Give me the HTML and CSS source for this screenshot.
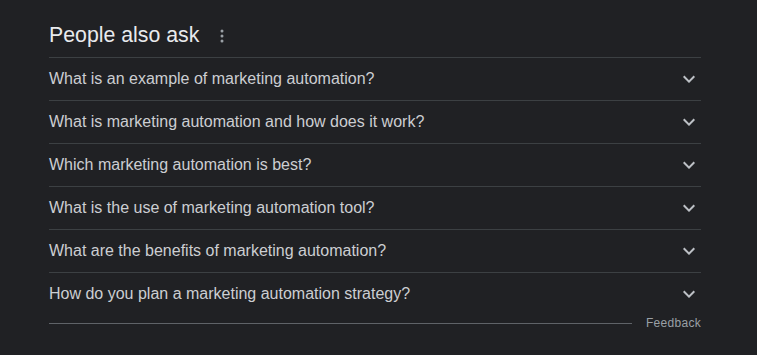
FILE: index.html
```html
<!DOCTYPE html>
<html lang="en">
<head>
    <meta charset="UTF-8">
    <title>People also ask</title>
    <link rel="stylesheet" href="styles.css">
</head>
<body>
    <div class="paa">
        <div class="paa-header">
            <h2>People also ask</h2>
            <svg class="more-icon" width="4" height="14" viewBox="0 0 4 14"><circle cx="2" cy="2" r="1.5"/><circle cx="2" cy="7" r="1.5"/><circle cx="2" cy="12" r="1.5"/></svg>
        </div>
        <div class="paa-list">
            <div class="paa-item"><span>What is an example of marketing automation?</span><svg class="chevron" viewBox="0 0 24 24"><path d="M7.41 8.59 12 13.17l4.59-4.58L18 10l-6 6-6-6z"/></svg></div>
            <div class="paa-item"><span>What is marketing automation and how does it work?</span><svg class="chevron" viewBox="0 0 24 24"><path d="M7.41 8.59 12 13.17l4.59-4.58L18 10l-6 6-6-6z"/></svg></div>
            <div class="paa-item"><span>Which marketing automation is best?</span><svg class="chevron" viewBox="0 0 24 24"><path d="M7.41 8.59 12 13.17l4.59-4.58L18 10l-6 6-6-6z"/></svg></div>
            <div class="paa-item"><span>What is the use of marketing automation tool?</span><svg class="chevron" viewBox="0 0 24 24"><path d="M7.41 8.59 12 13.17l4.59-4.58L18 10l-6 6-6-6z"/></svg></div>
            <div class="paa-item"><span>What are the benefits of marketing automation?</span><svg class="chevron" viewBox="0 0 24 24"><path d="M7.41 8.59 12 13.17l4.59-4.58L18 10l-6 6-6-6z"/></svg></div>
            <div class="paa-item last"><span>How do you plan a marketing automation strategy?</span><svg class="chevron" viewBox="0 0 24 24"><path d="M7.41 8.59 12 13.17l4.59-4.58L18 10l-6 6-6-6z"/></svg></div>
        </div>
        <div class="paa-footer">
            <div class="footer-line"></div>
            <span class="feedback">Feedback</span>
        </div>
    </div>
</body>
</html>
```

FILE: styles.css
```css
html, body {
    margin: 0;
    background-color: #202124;
}
body {
    font-family: Arial, "Liberation Sans", sans-serif;
    padding: 14px 56px 0 49px;
}
.paa {
    width: 652px;
}
.paa-header {
    display: flex;
    align-items: center;
    height: 43px;
}
.paa-header h2 {
    margin: 0;
    font-size: 21.3px;
    font-weight: normal;
    color: #e8eaed;
}
.more-icon {
    fill: #9aa0a6;
    margin-left: 21px;
}
.paa-list {
    border-top: 1px solid #3c4043;
}
.paa-item {
    display: flex;
    align-items: center;
    justify-content: space-between;
    height: 42px;
    border-bottom: 1px solid #3c4043;
    font-size: 16px;
    color: #ccced2;
}
.paa-item.last {
    border-bottom: none;
}
.chevron {
    width: 24px;
    height: 24px;
    fill: #bdc1c6;
    margin-right: 0;
}
.paa-footer {
    display: flex;
    align-items: center;
    margin-top: 1px;
}
.footer-line {
    flex: 1;
    border-top: 1px solid #5f6368;
    margin-right: 14px;
}
.feedback {
    font-size: 12px;
    color: #9aa0a6;
    letter-spacing: 0.3px;
}
```
